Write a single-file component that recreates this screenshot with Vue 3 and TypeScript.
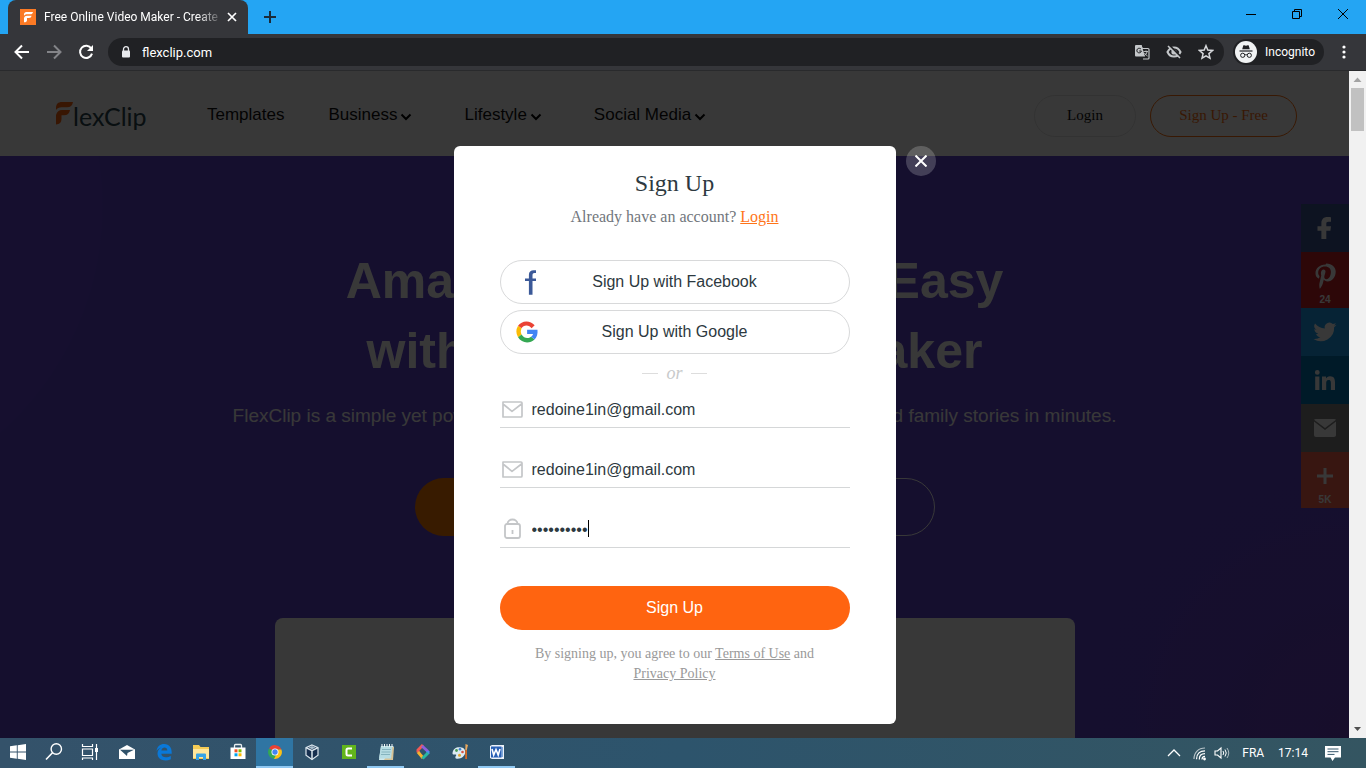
<script setup lang="ts">
import { ref } from 'vue'

interface NavItem { label: string; menu: boolean }
interface ShareItem { id: string; label: string; count?: string }

const navItems: NavItem[] = [
  { label: 'Templates', menu: false },
  { label: 'Business', menu: true },
  { label: 'Lifestyle', menu: true },
  { label: 'Social Media', menu: true },
]

const shareItems: ShareItem[] = [
  { id: 'facebook', label: 'Facebook' },
  { id: 'pinterest', label: 'Pinterest', count: '24' },
  { id: 'twitter', label: 'Twitter' },
  { id: 'linkedin', label: 'LinkedIn' },
  { id: 'mail', label: 'Email' },
  { id: 'more', label: 'More', count: '5K' },
]

const email = ref('redoine1in@gmail.com')
const confirmEmail = ref('redoine1in@gmail.com')
const password = ref('abcdefghij')
</script>

<template>
  <div class="browser">
    <div class="tabstrip">
      <div class="tab">
        <svg class="favicon" viewBox="0 0 16 16" aria-hidden="true">
          <rect width="16" height="16" fill="#fb7a25" />
          <path d="M4 5.600C4 4 4.800 3 6.400 3H13c-.3 1.600-1.200 2.300-2.600 2.300H7.500C6 5.300 5 5.500 4 6.700zM4 9c.5-1.500 1.500-2.200 3-2.200h4.600c-.4 1.500-1.200 2.200-2.600 2.200H7v2c0 1.400-1 2.300-3 2.300z" fill="#fff" />
        </svg>
        <span class="tab-title">Free Online Video Maker - Create</span>
        <button class="tab-close" type="button" aria-label="Close tab">
          <svg viewBox="0 0 10 10"><path d="M1 1l8 8M9 1L1 9" stroke="#fff" stroke-width="1.700" /></svg>
        </button>
      </div>
      <button class="new-tab" type="button" aria-label="New tab">
        <svg viewBox="0 0 12 12"><path d="M6 0v12M0 6h12" stroke="#1b2b38" stroke-width="2" /></svg>
      </button>
      <div class="window-controls">
        <button type="button" aria-label="Minimize"><svg viewBox="0 0 12 12"><path d="M1 6.500h10" stroke="#000" /></svg></button>
        <button type="button" aria-label="Restore"><svg viewBox="0 0 12 12"><path d="M1.500 3.500h7v7h-7zM3.500 3.500v-2h7v7h-2" fill="none" stroke="#000" /></svg></button>
        <button type="button" aria-label="Close"><svg viewBox="0 0 12 12"><path d="M1 1l10 10M11 1L1 11" stroke="#000" /></svg></button>
      </div>
    </div>

    <div class="toolbar">
      <div class="nav-buttons">
        <button type="button" aria-label="Back"><svg viewBox="0 0 16 16"><path d="M15 8H2M8 1.500L1.500 8 8 14.500" fill="none" stroke="#fff" stroke-width="2" /></svg></button>
        <button type="button" aria-label="Forward"><svg viewBox="0 0 16 16"><path d="M1 8h13M8 1.500L14.500 8 8 14.500" fill="none" stroke="#838488" stroke-width="2" /></svg></button>
        <button type="button" aria-label="Reload"><svg viewBox="0 0 16 16"><path d="M13.300 4.500A6.100 6.100 0 1 0 14 9.600" fill="none" stroke="#fff" stroke-width="2" /><path d="M15 1v6H9z" fill="#fff" /></svg></button>
      </div>
      <div class="omnibox">
        <svg class="lock" viewBox="0 0 10 12"><path d="M2.500 5V3.200a2.500 2.500 0 0 1 5 0V5" fill="none" stroke="#e8eaed" stroke-width="1.300" /><rect x="1" y="4.500" width="8" height="7" rx="1" fill="#e8eaed" /></svg>
        <input class="address" type="text" aria-label="Address" value="flexclip.com" />
        <div class="page-actions">
          <button type="button" aria-label="Translate">
            <svg viewBox="0 0 16 16">
              <path d="M2 1.500h5l1.200 3H14a1 1 0 0 1 1 1V14a1 1 0 0 1-1 1H9" fill="none" stroke="#c4c7ca" stroke-width="1.200" />
              <path d="M2 1h5.500L11 12.500H2a1 1 0 0 1-1-1V2a1 1 0 0 1 1-1z" fill="#c4c7ca" />
              <path d="M7 5.200A2.300 2.300 0 1 0 7.400 7H5.200" fill="none" stroke="#202124" />
              <path d="M9.500 7.500H14M12 6.500v1M13.200 7.700c-.5 1.800-1.500 3-2.800 4M10.500 9c.7 1.200 1.700 2.200 3 3" fill="none" stroke="#c4c7ca" stroke-width=".9" />
            </svg>
          </button>
          <button type="button" aria-label="Cookies blocked">
            <svg viewBox="0 0 16 16">
              <path d="M1.500 8C3 4.700 5.300 3.400 8 3.400S13 4.700 14.500 8C13 11.300 10.700 12.600 8 12.600S3 11.300 1.500 8z" fill="none" stroke="#c4c7ca" stroke-width="2" />
              <circle cx="8" cy="8" r="2.600" fill="#c4c7ca" />
              <path d="M3.500 1.500l11 11" stroke="#202124" stroke-width="2" /><path d="M2 2l12 12" stroke="#c4c7ca" stroke-width="1.600" />
            </svg>
          </button>
          <button type="button" aria-label="Bookmark this page">
            <svg viewBox="0 0 16 16"><path d="M8 1.700l1.800 4.400 4.700.4-3.600 3.100 1.100 4.600L8 11.800l-4 2.400 1.100-4.600L1.500 6.500l4.700-.4z" fill="none" stroke="#d6d8db" stroke-width="1.500" /></svg>
          </button>
        </div>
      </div>
      <div class="incognito">
        <svg viewBox="0 0 22 22">
          <circle cx="11" cy="11" r="11" fill="#f1f3f4" />
          <path d="M7.200 8.200l1-3.500c.2-.5.6-.5 1-.4l1.800.5 1.800-.5c.4-.1.800-.1 1 .4l1 3.500z" fill="#202124" />
          <path d="M4.500 10h13" stroke="#202124" stroke-width="1.200" />
          <circle cx="7.700" cy="14.300" r="2.100" fill="none" stroke="#202124" /><circle cx="14.300" cy="14.300" r="2.100" fill="none" stroke="#202124" />
          <path d="M9.800 14c.8-.5 1.600-.5 2.400 0" fill="none" stroke="#202124" />
        </svg>
        <span>Incognito</span>
      </div>
      <button class="menu" type="button" aria-label="Menu">
        <svg viewBox="0 0 4 14"><circle cx="2" cy="2" r="1.600" fill="#fff" /><circle cx="2" cy="7" r="1.600" fill="#fff" /><circle cx="2" cy="12" r="1.600" fill="#fff" /></svg>
      </button>
    </div>

    <div class="viewport">
      <div class="page">
        <header class="site-header">
          <a class="logo" href="#" aria-label="FlexClip">
            <svg viewBox="0 0 17 23"><path d="M0 6C0 2 2 0 6 0h11c-.5 3.500-2.500 5.200-6 5.200H5.500C3 5.200 1.300 6 0 8zM0 13c1-3.200 3-5 6-5h8c-.6 3.500-2.600 5.200-6 5.200H5.500V17c0 3.300-1.800 5.300-5.500 5.500z" fill="#ff6410" /></svg>
            <span>lexClip</span>
          </a>
          <nav class="site-nav">
            <a v-for="item in navItems" :key="item.label" href="#" :class="{ 'has-menu': item.menu }">
              {{ item.label }}
              <svg v-if="item.menu" viewBox="0 0 12 8"><path d="M1.500 1.500L6 6l4.500-4.500" fill="none" stroke="#000" stroke-width="2" /></svg>
            </a>
          </nav>
          <div class="account">
            <button class="header-login" type="button">Login</button>
            <button class="header-signup" type="button">Sign Up - Free</button>
          </div>
        </header>
        <main class="hero">
          <h1>Amazing Videos Made Easy<br />with FlexClip Video Maker</h1>
          <p>FlexClip is a simple yet powerful video maker to create marketing, business and family stories in minutes.</p>
          <div class="hero-actions">
            <button class="primary" type="button" aria-label="Make a free video"></button>
            <button class="secondary" type="button" aria-label="View templates"></button>
          </div>
          <div class="preview"></div>
        </main>
        <aside class="share">
          <a v-for="item in shareItems" :key="item.id" href="#" :class="['share-item', item.id]" :aria-label="item.label">
            <svg v-if="item.id === 'facebook'" viewBox="0 0 32 32"><path d="M22 5.200v4.600h-2.700c-1.600 0-2 .8-2 2v2.500H22l-.6 4.500h-4.100V27h-4.900v-8.200H8.500v-4.500h3.900v-3.400c0-3.900 2.400-6 6-6 1.600 0 3 .2 3.600.3z" /></svg>
            <svg v-else-if="item.id === 'pinterest'" viewBox="0 0 32 32"><path d="M16.700 4.500C10 4.500 6.500 9 6.500 13.200c0 2.300 1 4.400 2.900 5.200.4.200.6 0 .7-.4l.4-1.400c.1-.4 0-.5-.2-.8-.6-.8-1.100-1.700-1.100-3 0-3.700 2.700-6.300 6.900-6.300 3.700 0 5.800 2.300 5.800 5.300 0 4-1.800 7.400-4.400 7.400-1.500 0-2.500-1.200-2.200-2.700.4-1.700 1.200-3.600 1.200-4.900 0-1.100-.6-2.100-1.900-2.100-1.500 0-2.700 1.600-2.700 3.600 0 1.400.4 2.300.4 2.300s-1.500 6.500-1.800 7.700c-.5 2.200.1 5.200.2 5.400.1.200.3.200.4.100.2-.2 2.100-2.600 2.700-5l1-4.100c.5 1 2.100 1.900 3.700 1.900 4.800 0 8.200-4.500 8.200-10 0-3.800-3.600-7.900-9.500-7.900z" /></svg>
            <svg v-else-if="item.id === 'twitter'" viewBox="0 0 32 32"><path d="M27.500 8.800c-.8.400-1.700.6-2.700.8 1-.6 1.700-1.500 2-2.600-.9.500-1.900.9-3 1.100a4.700 4.700 0 0 0-8 4.300C11.900 12.200 8.400 10.300 6 7.400a4.700 4.700 0 0 0 1.500 6.300c-.8 0-1.500-.2-2.100-.6 0 2.300 1.600 4.200 3.800 4.700-.7.200-1.400.2-2.100.1.600 1.800 2.300 3.200 4.400 3.200A9.500 9.500 0 0 1 4.500 23 13.300 13.300 0 0 0 25.100 11.200c1-.7 1.800-1.500 2.400-2.400z" /></svg>
            <svg v-else-if="item.id === 'linkedin'" viewBox="0 0 32 32"><path d="M6.200 12.600h4.200V26H6.200zM8.300 6a2.400 2.400 0 1 1 0 4.800 2.400 2.400 0 0 1 0-4.800M13 12.600h4v1.800c.6-1 1.900-2.200 4-2.200 4.200 0 5 2.800 5 6.400V26h-4.100v-6.500c0-1.600 0-3.600-2.200-3.600s-2.500 1.700-2.500 3.500V26H13z" /></svg>
            <svg v-else-if="item.id === 'mail'" viewBox="0 0 32 32"><path d="M27 9.500V23c0 1.100-.9 2-2 2H7a2 2 0 0 1-2-2V9.500l11 8.500zM5 7.800C5.300 7.300 6 7 7 7h18c1 0 1.700.3 2 .8L16 16z" /></svg>
            <svg v-else viewBox="0 0 32 32"><path d="M17.500 14.500V8h-3v6.500H8v3h6.500V24h3v-6.500H24v-3z" /></svg>
            <span v-if="item.count">{{ item.count }}</span>
          </a>
        </aside>
      </div>

      <div class="overlay">
        <section class="modal" role="dialog" aria-labelledby="signup-title">
          <h2 id="signup-title">Sign Up</h2>
          <p class="existing">Already have an account? <a href="#">Login</a></p>
          <button class="social" type="button">
            <svg viewBox="0 0 28 28"><path d="M20 2.200h-2.300c-3 0-4.800 1.600-4.800 4.600v3.700H9v2.600h3.900v13.700h3.600V13.100H20v-2.600h-3.500V7.300c0-1.500.6-2.200 2-2.200H20z" fill="#3b5998" /></svg>
            <span>Sign Up with Facebook</span>
          </button>
          <button class="social" type="button">
            <svg viewBox="0 -6 63 63">
              <path d="M12 17.200L4.600 11.600A24 24 0 0 1 42 10.500l-6.900 6.700A13.500 13.500 0 0 0 12 17.200z" fill="#ea4335" />
              <path d="M4.600 11.600l8 6.100a14.500 14.500 0 0 0 0 13.600l-8 6.100a25.500 25.500 0 0 1 0-25.800z" fill="#fbbc05" />
              <path d="M4.600 37.400l8-6.100c5 9.200 15.500 9.500 21.400 5.100l7.800 6C30.800 52.400 12.500 51 4.600 37.400z" fill="#34a853" />
              <path d="M25 20.500h23.300c1 8.600-1 17-6.500 21.900l-7.800-6c2.300-1.500 3.800-3.700 4.400-6.400H25z" fill="#4285f4" />
            </svg>
            <span>Sign Up with Google</span>
          </button>
          <div class="separator"><span>or</span></div>
          <form @submit.prevent>
            <label class="field">
              <svg viewBox="0 0 24 24"><path d="M3 5h18q1 0 1 1v13q0 1-1 1H3V5zM3 7l9 7.300L21.500 7" fill="none" stroke="#c4c6c8" stroke-width="1.700" stroke-linejoin="round" /></svg>
              <input v-model="email" type="email" aria-label="Email" />
            </label>
            <label class="field">
              <svg viewBox="0 0 24 24"><path d="M3 5h18q1 0 1 1v13q0 1-1 1H3V5zM3 7l9 7.300L21.500 7" fill="none" stroke="#c4c6c8" stroke-width="1.700" stroke-linejoin="round" /></svg>
              <input v-model="confirmEmail" type="email" aria-label="Confirm email" />
            </label>
            <label class="field">
              <svg viewBox="0 0 24 24"><rect x="5" y="7" width="15" height="14" rx="2" fill="none" stroke="#c4c6c8" stroke-width="1.800" /><path d="M7.500 7c0-6 10-6 10 0M12.500 13v4" fill="none" stroke="#c4c6c8" stroke-width="1.800" /></svg>
              <input v-model="password" class="password" type="password" aria-label="Password" />
              <span class="caret"></span>
            </label>
            <button class="submit" type="submit">Sign Up</button>
          </form>
          <p class="terms">By signing up, you agree to our <a href="#">Terms of Use</a> and <a href="#">Privacy Policy</a></p>
          <button class="modal-close" type="button" aria-label="Close">
            <svg viewBox="0 0 12 12"><path d="M0.500 0.500l11 11M11.500 0.500l-11 11" stroke="#fff" stroke-width="2" /></svg>
          </button>
        </section>
      </div>

      <div class="scrollbar" aria-hidden="true">
        <svg viewBox="0 0 17 17"><path d="M4.500 11h8l-4-4.500z" fill="#a3a3a3" /></svg>
        <div class="thumb"></div>
        <svg class="down" viewBox="0 0 17 17"><path d="M5 6h7l-3.500 4z" fill="#505050" /></svg>
      </div>
    </div>

    <footer class="taskbar">
      <div class="tasks">
        <button class="task system" type="button" aria-label="Start"><svg viewBox="0 0 20 20"><path d="M2 4.300l6.800-1v6.300H2zM9.700 3.200L18 2v7.600H9.700zM2 10.500h6.800v6.300L2 15.800zM9.700 10.500H18V18l-8.300-1.200z" fill="#fff" /></svg></button>
        <button class="task system" type="button" aria-label="Search"><svg viewBox="0 0 20 20"><circle cx="12.300" cy="7" r="5.200" fill="none" stroke="#fff" stroke-width="1.400" /><path d="M8.500 10.800L2 17.500" stroke="#fff" stroke-width="1.600" /></svg></button>
        <button class="task system" type="button" aria-label="Task view"><svg viewBox="0 0 20 20"><path d="M2.500 2v2.500h10V2M2.500 7h10v6.500h-10zM2.500 18v-2h10v2M16.500 2v16" fill="none" stroke="#fff" stroke-width="1.200" /><rect x="15" y="6" width="3" height="4" fill="#fff" /></svg></button>
        <button class="task" type="button" aria-label="Mail"><svg viewBox="0 0 20 20"><path d="M2 7.500L10 3l8 4.500V17H2z" fill="#fff" /><path d="M3 7.700h14L10.500 11l-.5 3z" fill="#30526a" /></svg></button>
        <button class="task" type="button" aria-label="Edge"><svg viewBox="0 0 20 20"><path d="M2.500 9C3.200 4.500 6 2 10.300 2c5 0 7.400 3.600 7.400 8.400v1.300H7.300c.2 4.300 6.100 4.200 9.500 2.200v3.300c-5.800 2.800-13.300.7-13.300-5.700 0-2.800 1.500-4.700 4-6C5.500 6 3.800 7 2.500 9zm4.900-.6h5.900c0-3.800-5.400-3.700-5.900 0z" fill="#0a78d8" /></svg></button>
        <button class="task" type="button" aria-label="File Explorer"><svg viewBox="0 0 20 20"><path d="M2 3h6l1.500 2H18v12H2z" fill="#f5cb55" /><path d="M2 7h16v9H2z" fill="#ffe69a" /><path d="M5 18v-5.500q0-1 1-1h8q1 0 1 1V18h-3v-3H8v3z" fill="#36a3e5" /></svg></button>
        <button class="task" type="button" aria-label="Store"><svg viewBox="0 0 20 20"><path d="M6.500 6V3.500q0-1 1-1h5q1 0 1 1V6" fill="none" stroke="#e8edf0" stroke-width="1.300" /><path d="M2.500 5.500h15V17h-15z" fill="#fff" /><path d="M6.500 7.300h3v3h-3z" fill="#f25022" /><path d="M10.500 7.300h3v3h-3z" fill="#7fba00" /><path d="M6.500 11.300h3v3h-3z" fill="#00a4ef" /><path d="M10.500 11.300h3v3h-3z" fill="#ffb900" /></svg></button>
        <button class="task active open" type="button" aria-label="Chrome"><svg viewBox="0 0 20 20"><path d="M10 10L4.100 6.400A6.900 6.900 0 0 1 16.400 7.500H10z" fill="#e94235" /><path d="M4.100 6.400A6.900 6.900 0 0 0 9 16.900l2.500-4.200L10 10z" fill="#34a853" /><path d="M16.400 7.500A6.900 6.900 0 0 1 9 16.900l3-5.900-2-3.500z" fill="#fbc116" /><circle cx="10" cy="10" r="3.500" fill="#fff" /><circle cx="10" cy="10" r="2.700" fill="#4285f4" /></svg></button>
        <button class="task" type="button" aria-label="VirtualBox"><svg viewBox="0 0 20 20"><path d="M10 3l6 2.700v7.600L10 17.500l-6-4.200V5.700z" fill="#17304f" stroke="#dce7ee" stroke-width="1.200" /><path d="M4 5.700l6 3 6-3M10 8.700v8.800" fill="none" stroke="#dce7ee" stroke-width="1.500" /><path d="M6.500 5.600L10 4l3.500 1.600L10 7.300z" fill="#a9bdcb" /></svg></button>
        <button class="task" type="button" aria-label="Camtasia"><svg viewBox="0 0 20 20"><rect x="3" y="3" width="14" height="14" fill="#62b51c" /><path d="M13 6.500H9q-1.500 0-1.500 1.500v4q0 1.500 1.500 1.500h4" fill="none" stroke="#fff" stroke-width="2" /></svg></button>
        <button class="task open" type="button" aria-label="Notepad"><svg viewBox="0 0 20 20"><path d="M5 4h12.500L16 18H3z" fill="#cfe9ed" /><path d="M16 5h2l-1 13H8z" fill="#d7c396" /><path d="M5 4h11.500L15 16.500H3z" fill="#b6dce3" /><path d="M6 7.500h9M5.500 10h9M5 12.500h9" stroke="#78a8b5" stroke-width=".8" /><path d="M6 2v3M8.500 2v3M11 2v3M13.500 2v3M16 2v3" stroke="#eef5f6" /></svg></button>
        <button class="task" type="button" aria-label="FlexClip"><svg viewBox="0 0 20 20"><g fill="none" stroke-width="3"><path d="M5 10.500V8l5-5" stroke="#f25a56" /><path d="M9 4l6 5.500" stroke="#8b60db" /><path d="M15 9v3" stroke="#4b8ef0" /><path d="M5 10l5 6" stroke="#f6b32d" /><path d="M15 11l-5.500 5.500" stroke="#27b8a1" /></g></svg></button>
        <button class="task" type="button" aria-label="Paint"><svg viewBox="0 0 20 20"><path d="M2.500 11C3 7 6 5 10 5.300c4 .2 5.500 2.500 5.200 5.500-.4 3.600-4 6.200-8.200 5.900-2 0-2.100-1.700-1-3 .8-1.300-.5-1.500-1.500-1.200-1.200.4-2.100-.2-2-1.500z" fill="#dceaf2" /><circle cx="6.500" cy="8.500" r="1.400" fill="#4b9b55" /><circle cx="10" cy="7.300" r="1.300" fill="#3d80d0" /><circle cx="12.500" cy="10" r="1.300" fill="#d85343" /><circle cx="9.500" cy="13.300" r="1.500" fill="#e3a62f" /><path d="M15.500 2l2.500 1-1.200 5h-1.500z" fill="#eaa75b" /><path d="M15.200 8h1.800v9h-1.800z" fill="#d36823" /></svg></button>
        <button class="task open" type="button" aria-label="Word"><svg viewBox="0 0 20 20"><path d="M3 4l2-1h12v14H5l-2-1z" fill="#eef3fa" /><path d="M14.500 5H16v10h-1.500z" fill="#7ea9dc" /><rect x="4" y="4.500" width="10.500" height="11" fill="#2960b5" /><path d="M5 7l1.700 6 2.300-5.500 2.200 5.500 1.800-6" fill="none" stroke="#fff" stroke-width="1.600" /></svg></button>
      </div>
      <div class="tray">
        <svg class="tray-icon" viewBox="0 0 16 16"><path d="M2 11l6-6 6 6" fill="none" stroke="#fff" stroke-width="1.300" /></svg>
        <svg class="tray-icon wifi" viewBox="0 0 16 16"><g fill="none" stroke="#fff" stroke-width="1.200"><path d="M2 14C2 7.500 6.500 3 13 3" opacity=".65" /><path d="M4.500 14.200C4.500 9 8 5.800 13 5.800M7.300 14.400c0-3.500 2.300-5.700 5.700-5.700M10 14.400c0-1.800 1.200-3 3-3" /></g><circle cx="12.500" cy="14" r="1.400" fill="#fff" /></svg>
        <svg class="tray-icon" viewBox="0 0 16 16"><path d="M1 6h2.500L7 3v10l-3.500-3H1z" fill="none" stroke="#fff" stroke-width="1.100" /><path d="M9 6q1.500 2 0 4M11 4.500q2.500 3.500 0 7" fill="none" stroke="#fff" /><path d="M13 3q3.500 5 0 10" fill="none" stroke="#fff" opacity=".6" /></svg>
        <span class="language">FRA</span>
        <time>17:14</time>
        <svg class="notifications" viewBox="0 0 18 18"><path d="M1 2h16v11.500h-6L8.500 17 6.500 13.500H1z" fill="#fff" /><path d="M3.500 5h11M3.500 7.700h11M3.500 10.400h7" stroke="#34566a" /></svg>
      </div>
    </footer>
  </div>
</template>

<style>
body { margin: 0; }
</style>

<style scoped>
* { box-sizing: border-box; }
button { border: 0; padding: 0; background: none; font: inherit; color: inherit; cursor: pointer; }
svg { display: block; flex: none; }
input { font: inherit; color: inherit; border: 0; outline: 0; padding: 0; background: none; min-width: 0; }
h1, h2, p { margin: 0; font-weight: 400; }

.browser { display: flex; flex-direction: column; height: 100vh; overflow: hidden; font-family: "Liberation Sans", Arial, sans-serif; }

.tabstrip { display: flex; flex: none; height: 34px; padding-left: 8px; background: #24a5f3; font: 12px Roboto, sans-serif; color: #fff; }
.tab { display: flex; align-items: center; width: 240px; padding: 0 8px 0 12px; border-radius: 8px 8px 0 0; background: #35363a; }
.favicon { width: 16px; height: 16px; }
.tab-title { flex: 1; min-width: 0; margin-left: 8px; overflow: hidden; white-space: nowrap; mask-image: linear-gradient(to right, #000 85%, transparent); }
.tab-close { display: grid; place-items: center; width: 16px; height: 16px; }
.tab-close svg { width: 10px; height: 10px; }
.new-tab { display: grid; place-items: center; width: 28px; margin-left: 8px; }
.new-tab svg { width: 12px; height: 12px; }
.window-controls { display: flex; margin-left: auto; }
.window-controls button { display: grid; place-items: center; width: 46px; height: 28px; }
.window-controls svg { width: 12px; height: 12px; }

.toolbar { display: flex; align-items: center; flex: none; height: 37px; padding: 0 20px 0 8px; background: #35363a; border-bottom: 1px solid #292a2c; color: #fff; font: 13px Roboto, sans-serif; }
.nav-buttons { display: flex; gap: 4px; }
.nav-buttons button { display: grid; place-items: center; width: 28px; height: 28px; }
.nav-buttons svg { width: 16px; height: 16px; }
.omnibox { display: flex; flex: 1; align-items: center; height: 28px; margin-left: 8px; padding: 0 10px 0 13px; border-radius: 14px; background: #202124; }
.lock { width: 10px; height: 12px; }
.address { flex: 1; margin-left: 11px; font-size: 13px; }
.page-actions { display: flex; gap: 16px; }
.page-actions svg { width: 16px; height: 16px; }
.incognito { display: flex; align-items: center; gap: 8px; height: 26px; margin-left: 9px; padding: 0 9px 0 2px; border-radius: 13px; background: #202124; font-size: 12px; }
.incognito svg { width: 22px; height: 22px; }
.menu { margin-left: 18px; }
.menu svg { width: 4px; height: 14px; }

.viewport { position: relative; display: flex; flex: 1; min-height: 0; overflow: hidden; }
.page { position: relative; flex: 1; min-width: 0; overflow: hidden; }
.site-header { display: flex; align-items: center; height: 85px; padding: 4px 52px 0 56px; background: #fff; }
.logo { display: flex; align-items: center; width: 151px; color: #29454e; text-decoration: none; font: 25px/30px Lato, sans-serif; }
.logo svg { width: 17px; height: 23px; margin-bottom: 4px; }
.site-nav { display: flex; gap: 44px; font-size: 17px; line-height: 22px; padding-bottom: 2px; }
.site-nav a { display: flex; align-items: center; gap: 3px; color: #111; text-decoration: none; white-space: nowrap; }
.site-nav .has-menu { padding-right: 8px; }
.site-nav svg { width: 12px; height: 8px; margin-top: 4px; }
.account { display: flex; gap: 14px; margin-left: auto; font: 15px "Liberation Serif", serif; }
.account button { height: 42px; border-radius: 21px; }
.header-login { width: 102px; border: 1px solid #e5e5e5; color: #111; }
.header-signup { width: 147px; border: 1px solid #ff6f0f; color: #ff6f0f; }

.hero { display: flex; flex-direction: column; align-items: center; min-height: 582px; padding-top: 90px; color: #fff; text-align: center; background: radial-gradient(circle at -200px 50px, #6647d7 300px, transparent 304px), radial-gradient(circle at 100% 75%, #6c43c4 0, transparent 260px), #6044d2; }
.hero h1 { font-size: 50px; line-height: 70px; font-weight: 700; }
.hero p { margin-top: 20px; font-size: 19px; line-height: 20px; }
.hero-actions { display: flex; gap: 20px; margin-top: 52px; }
.hero-actions button { width: 250px; height: 58px; border-radius: 29px; }
.primary { background: #ff7d00; }
.hero-actions .secondary { border: 1px solid #fff; }
.preview { width: 800px; max-width: 90%; height: 300px; margin-top: 82px; border-radius: 8px; background: #fff; }

.share { position: absolute; top: 133px; right: 0; width: 48px; }
.share-item { display: flex; flex-direction: column; align-items: center; min-height: 48px; padding-top: 8px; color: #fff; font: 700 10px/16px "Liberation Sans", sans-serif; text-decoration: none; }
.share-item svg { width: 32px; height: 32px; fill: #fff; }
.facebook { background: #3b5998; }
.pinterest { background: #cb2027; }
.twitter { background: #1da1f2; }
.linkedin { background: #0077b5; }
.mail { background: #848484; }
.more { background: #ff6550; }

.overlay { position: absolute; inset: 0 17px 0 0; display: flex; justify-content: center; align-items: flex-start; padding-top: 75px; background: rgba(0, 0, 0, .78); }
.modal { position: relative; width: 442px; padding: 21px 46px 40px; border-radius: 6px; background: #fff; color: #2d3940; text-align: center; }
.modal h2 { font: 24px/32px "Liberation Serif", serif; }
.existing { margin: 8px 0 33px; color: #71767c; font: 16px/20px "Liberation Serif", serif; }
.existing a { color: #ff7418; }
.social { display: flex; align-items: center; width: 100%; height: 44px; padding: 0 43px 0 15px; border: 1px solid #d8d9da; border-radius: 22px; font-size: 16px; }
.social svg { width: 28px; height: 28px; }
.social span { flex: 1; }
.social + .social { margin-top: 6px; }
.separator { display: flex; align-items: center; justify-content: center; gap: 8px; height: 36px; padding-top: 2px; color: #c8cacb; font: italic 18px/20px "Liberation Serif", serif; }
.separator::before, .separator::after { content: ""; width: 16px; height: 1px; background: #ddd; }
.field { display: flex; align-items: center; height: 38px; margin-bottom: 22px; border-bottom: 1px solid #d5d7d8; font-size: 16px; }
.field svg { width: 24px; height: 24px; margin-right: 8px; }
.field input { flex: 1; height: 24px; padding-top: 2px; }
.field .password { flex: none; field-sizing: content; }
.caret { width: 1px; height: 17px; background: #000; }
.submit { width: 100%; height: 44px; margin-top: 16px; border-radius: 22px; background: #ff6410; color: #fff; font-size: 16px; }
.terms { margin: 14px 24px 0; color: #999; font: 14px/20px "Liberation Serif", serif; }
.terms a { color: inherit; }
.modal-close { position: absolute; top: 0; left: 100%; display: grid; place-items: center; width: 30px; height: 30px; margin-left: 10px; border-radius: 15px; background: rgba(255, 255, 255, .2); }
.modal-close svg { width: 12px; height: 12px; }

.scrollbar { display: flex; flex-direction: column; flex: none; width: 17px; background: #f1f1f1; }
.scrollbar svg { width: 17px; height: 17px; }
.thumb { height: 43px; margin: 0 2px; background: #c1c1c1; }
.scrollbar .down { margin-top: auto; }

.taskbar { display: flex; flex: none; height: 30px; justify-content: space-between; background: linear-gradient(to right, #34526a, #2d546c 50%, #345561); color: #fff; font: 12px Roboto, sans-serif; }
.tasks { display: flex; }
.task { display: grid; place-items: center; width: 37px; height: 30px; border-bottom: 2px solid transparent; }
.task.system { width: 36px; }
.task svg { width: 20px; height: 20px; }
.task.open { border-bottom-color: #8fc8f2; }
.task.active { background: #2f75a3; }
.tray { display: flex; align-items: center; padding-right: 24px; }
.tray-icon { width: 16px; height: 16px; margin-right: 6px; }
.wifi { margin-left: 4px; }
.language { margin-left: 6px; }
time { margin-left: 14px; }
.notifications { width: 18px; height: 18px; margin-left: 16px; }
</style>
